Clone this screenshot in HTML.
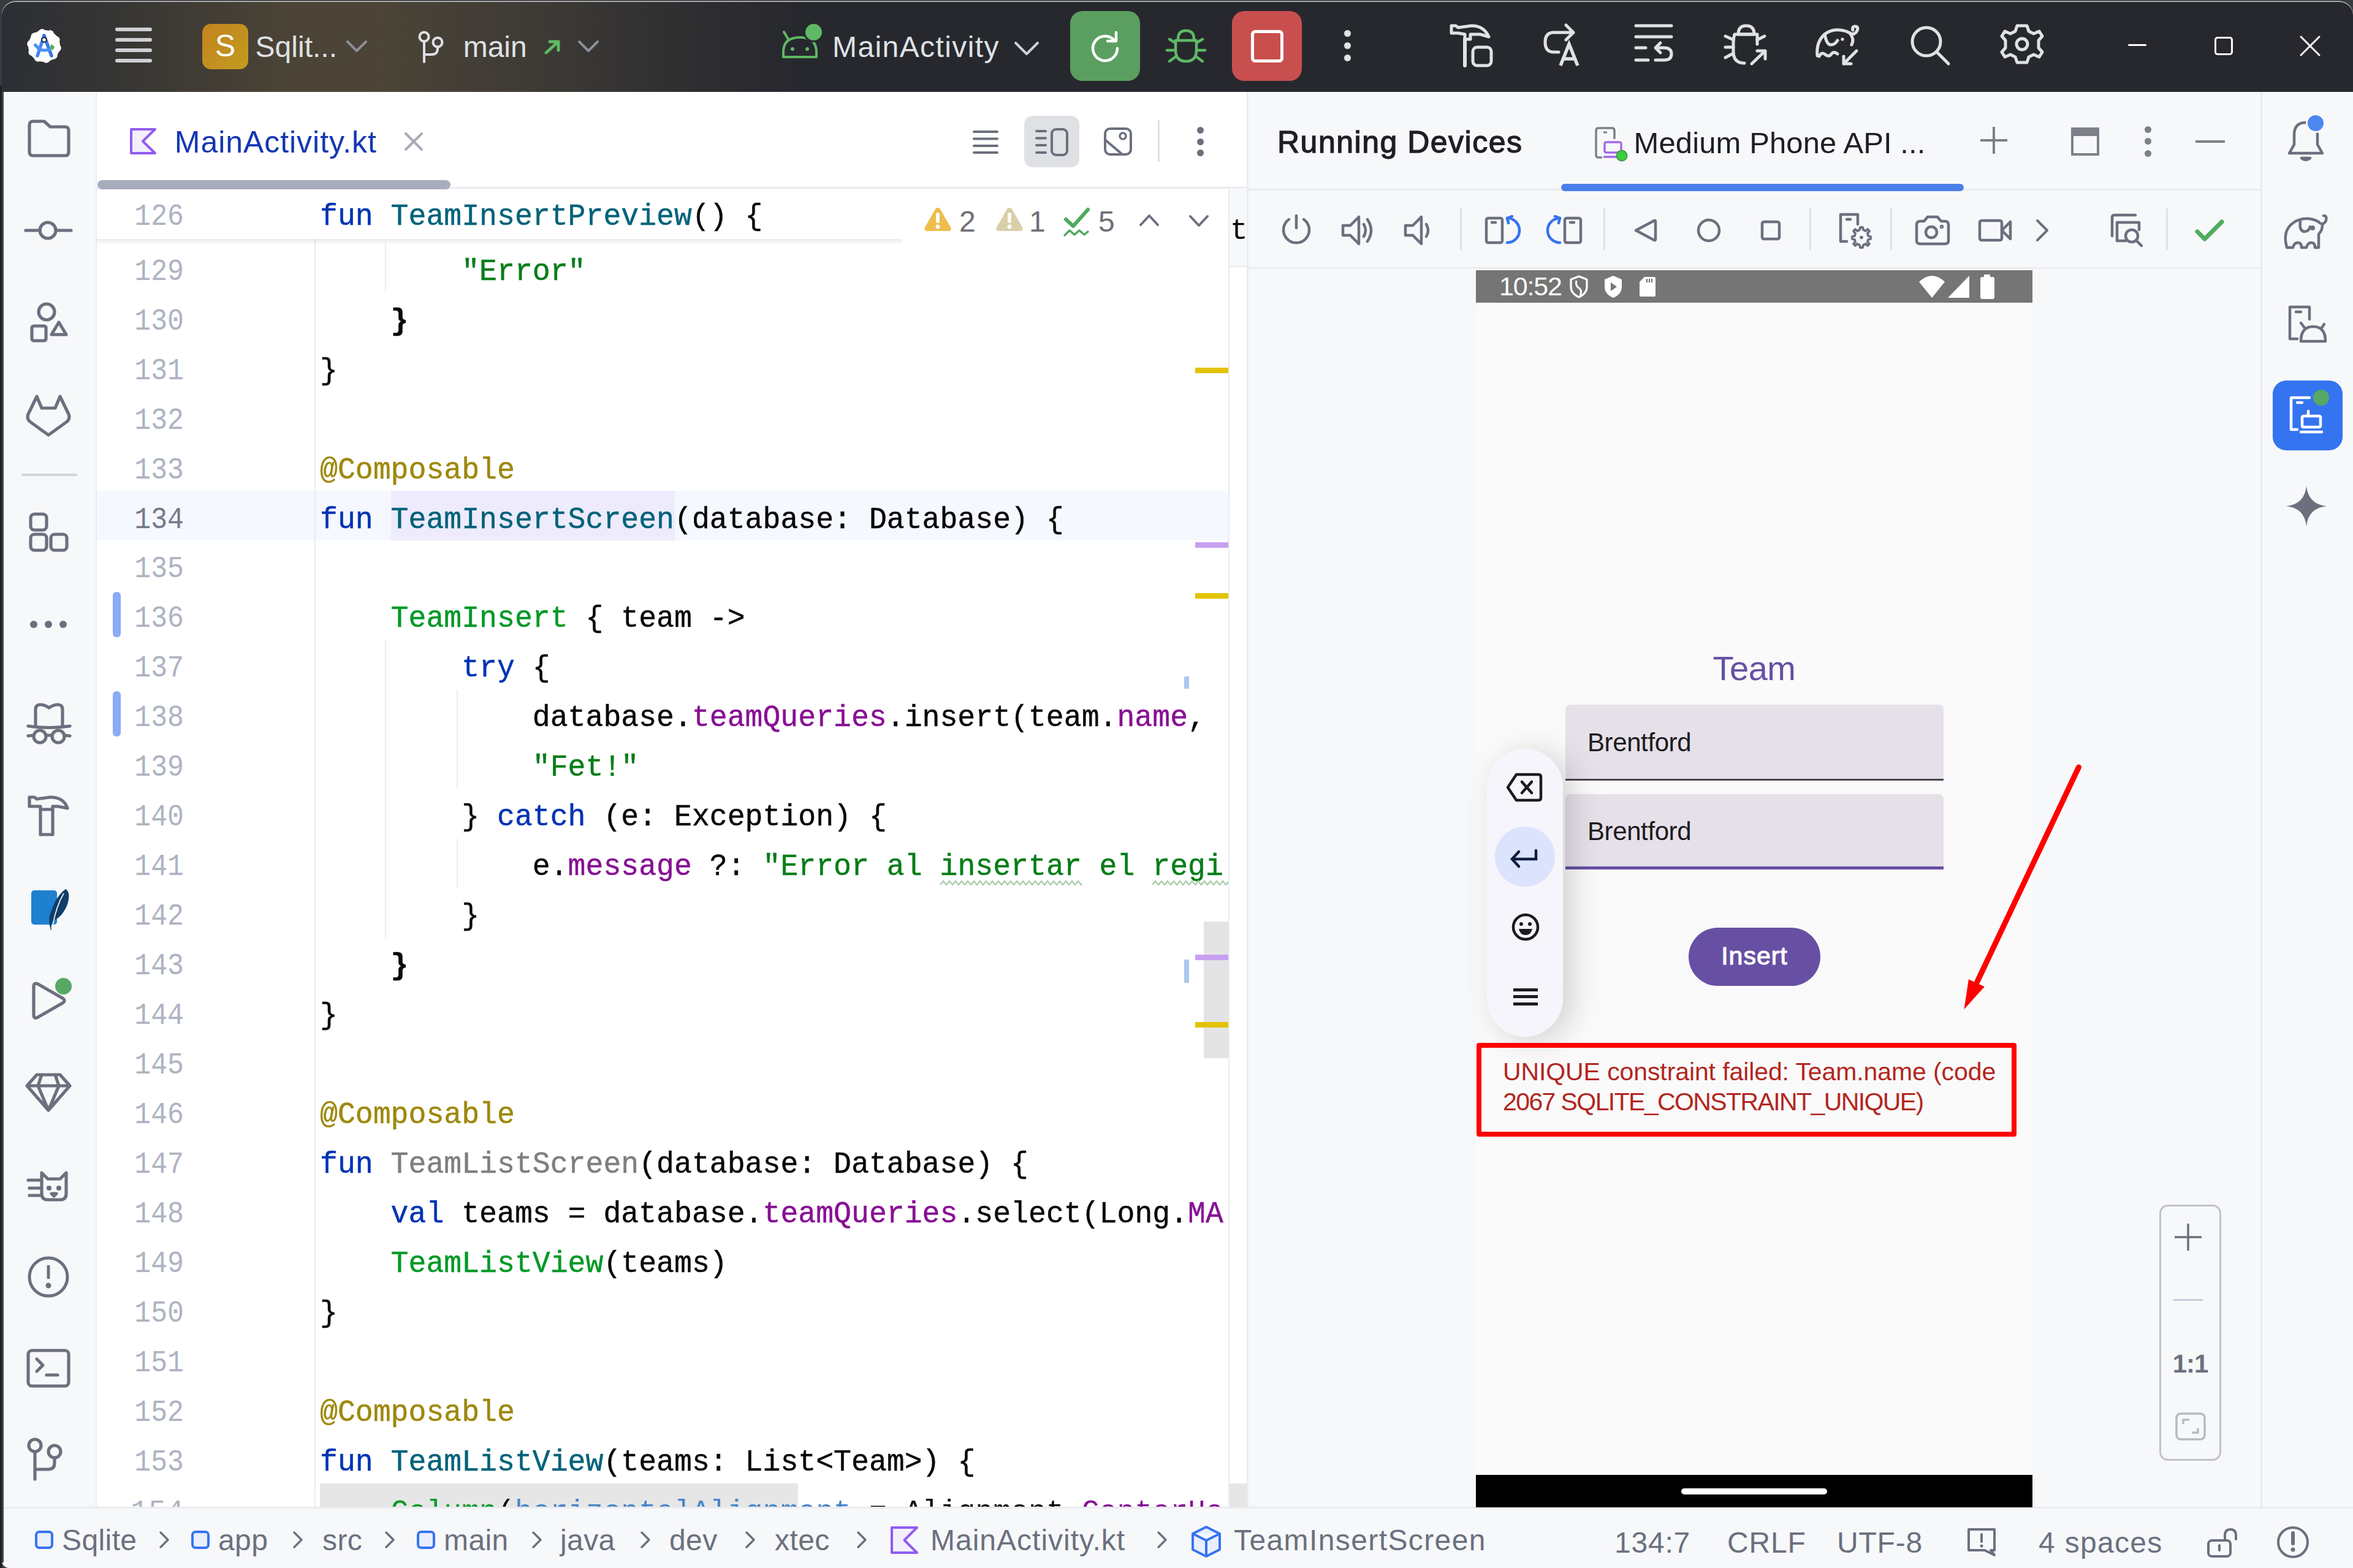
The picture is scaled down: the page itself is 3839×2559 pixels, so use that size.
<!DOCTYPE html>
<html><head><meta charset="utf-8"><style>
html,body{margin:0;padding:0;}
body{width:3839px;height:2559px;position:relative;overflow:hidden;background:#2b2d30;font-family:"Liberation Sans",sans-serif;}
div,svg{box-sizing:border-box;}
</style></head><body>
<div style="position:absolute;left:0px;top:0px;width:3839px;height:2559px;background:#3a3b3f;"></div>
<div style="position:absolute;left:20px;top:0px;width:3800px;height:3px;background:#4a4b4f;"></div>
<div style="position:absolute;left:3px;top:2px;width:3836px;height:2557px;background:#f7f8fa;border-radius:22px 22px 12px 12px;overflow:hidden;"></div>
<div style="position:absolute;left:3px;top:3px;width:3836px;height:147px;border-radius:22px 22px 0 0;background:linear-gradient(90deg,#2c2f35 0px,#363533 180px,#4a4336 450px,#4b4437 620px,#3c3935 900px,#2d2d30 1150px,#27282e 1300px,#27282e 3839px);"></div>
<div style="position:absolute;left:0px;top:140px;width:3px;height:2419px;background:#1f2023;"></div>
<div style="position:absolute;left:3px;top:150px;width:3px;height:2400px;background:#444548;"></div>
<div style="position:absolute;left:6px;top:150px;width:152px;height:2310px;background:#f7f8fa;border-right:2px solid #ebecf0;"></div>
<div style="position:absolute;left:158px;top:150px;width:1876px;height:2310px;background:#ffffff;"></div>
<div style="position:absolute;left:158px;top:305px;width:1876px;height:3px;background:#ebecf0;"></div>
<div style="position:absolute;left:2034px;top:150px;width:3px;height:2310px;background:#ebecf0;"></div>
<div style="position:absolute;left:2037px;top:150px;width:1651px;height:2310px;background:#f7f8fa;"></div>
<div style="position:absolute;left:2037px;top:308px;width:1651px;height:3px;background:#ebecf0;"></div>
<div style="position:absolute;left:2037px;top:436px;width:1651px;height:3px;background:#ebecf0;"></div>
<div style="position:absolute;left:3688px;top:150px;width:3px;height:2310px;background:#ebecf0;"></div>
<div style="position:absolute;left:3691px;top:150px;width:148px;height:2310px;background:#f7f8fa;"></div>
<div style="position:absolute;left:6px;top:2459px;width:3833px;height:3px;background:#ebecf0;"></div>
<div style="position:absolute;left:6px;top:2462px;width:3833px;height:97px;background:#f7f8fa;border-radius:0 0 0 12px;"></div>
<svg style="position:absolute;left:42px;top:45px;" width="60" height="60" viewBox="0 0 60 60"><circle cx="30" cy="30" r="26" fill="#ffffff"/><circle cx="51.24" cy="33.36" r="6.5" fill="#ffffff"/><circle cx="45.20" cy="45.20" r="6.5" fill="#ffffff"/><circle cx="33.36" cy="51.24" r="6.5" fill="#ffffff"/><circle cx="20.24" cy="49.16" r="6.5" fill="#ffffff"/><circle cx="10.84" cy="39.76" r="6.5" fill="#ffffff"/><circle cx="8.76" cy="26.64" r="6.5" fill="#ffffff"/><circle cx="14.80" cy="14.80" r="6.5" fill="#ffffff"/><circle cx="26.64" cy="8.76" r="6.5" fill="#ffffff"/><circle cx="39.76" cy="10.84" r="6.5" fill="#ffffff"/><circle cx="49.16" cy="20.24" r="6.5" fill="#ffffff"/>
<path d="M30 13 L19 46" stroke="#4285f4" stroke-width="5.5" stroke-linecap="round"/>
<path d="M30 13 L42 46" stroke="#3b78e7" stroke-width="5.5" stroke-linecap="round"/>
<path d="M15.5 28.5 L23 36 Q30 38 39 36" stroke="#4d8ef5" stroke-width="5" fill="none" stroke-linecap="round"/>
<circle cx="30" cy="20" r="3.8" fill="#fff" stroke="#1b2430" stroke-width="2"/>
<path d="M41 27 L47 31 L44 37 L40 34 Z" fill="#4caf50"/></svg>
<div style="position:absolute;left:188px;top:45px;width:60px;height:6px;background:#cfd0d4;border-radius:3px;"></div>
<div style="position:absolute;left:188px;top:62px;width:60px;height:6px;background:#cfd0d4;border-radius:3px;"></div>
<div style="position:absolute;left:188px;top:79px;width:60px;height:6px;background:#cfd0d4;border-radius:3px;"></div>
<div style="position:absolute;left:188px;top:96px;width:60px;height:6px;background:#cfd0d4;border-radius:3px;"></div>
<div style="position:absolute;left:330px;top:39px;width:75px;height:74px;background:linear-gradient(135deg,#c3831f,#c39b1f);border-radius:14px;"></div>
<div style="position:absolute;left:330px;top:48.25px;font-family:'Liberation Sans', sans-serif;font-size:50px;line-height:55.85px;color:#ffffff;font-weight:400;letter-spacing:0px;white-space:pre;width:75px;text-align:center;">S</div>
<div style="position:absolute;left:416.6px;top:50.06px;font-family:'Liberation Sans', sans-serif;font-size:48px;line-height:53.62px;color:#dfe1e5;font-weight:400;letter-spacing:0px;white-space:pre;">Sqlit...</div>
<svg style="position:absolute;left:563.0px;top:63.5px;" width="38" height="23.0" viewBox="0 0 38 23.0"><path d="M4 4 L19.0 19.0 L34 4" fill="none" stroke="#8c8f98" stroke-width="4" stroke-linecap="round" stroke-linejoin="round"/></svg>
<svg style="position:absolute;left:678px;top:46px;" width="50" height="60" viewBox="0 0 50 60"><circle cx="14" cy="14" r="7.5" fill="none" stroke="#dfe1e5" stroke-width="4"/>
<circle cx="36" cy="23" r="7.5" fill="none" stroke="#dfe1e5" stroke-width="4"/>
<path d="M14 21.5 L14 55 M14 43 L26 43 Q36 43 36 33 L36 30.5" fill="none" stroke="#dfe1e5" stroke-width="4" stroke-linecap="round"/></svg>
<div style="position:absolute;left:755.7px;top:50.06px;font-family:'Liberation Sans', sans-serif;font-size:48px;line-height:53.62px;color:#dfe1e5;font-weight:400;letter-spacing:0px;white-space:pre;">main</div>
<svg style="position:absolute;left:886px;top:62px;" width="32" height="30" viewBox="0 0 32 30"><path d="M5 24 L25 6 M11 6 L25 6 L25 20" fill="none" stroke="#5fb865" stroke-width="5" stroke-linecap="round" stroke-linejoin="round"/></svg>
<svg style="position:absolute;left:941.0px;top:63.5px;" width="38" height="23.0" viewBox="0 0 38 23.0"><path d="M4 4 L19.0 19.0 L34 4" fill="none" stroke="#8c8f98" stroke-width="4" stroke-linecap="round" stroke-linejoin="round"/></svg>
<svg style="position:absolute;left:1270px;top:35px;" width="70" height="66" viewBox="0 0 70 66"><path d="M8 58 L8 50 Q8 26 35 26 Q62 26 62 50 L62 58 Z" fill="none" stroke="#5fb865" stroke-width="4" stroke-linejoin="round"/>
<path d="M16 29 L9 17 M54 29 L58 22" stroke="#5fb865" stroke-width="4" stroke-linecap="round"/>
<circle cx="23" cy="45" r="3" fill="#5fb865"/><circle cx="47" cy="45" r="3" fill="#5fb865"/></svg>
<div style="position:absolute;left:1314px;top:39px;width:27px;height:27px;background:#5fb865;border-radius:50%;border:3px solid #27282e;box-sizing:content-box;left:1311px;top:36px;"></div>
<div style="position:absolute;left:1358px;top:50.06px;font-family:'Liberation Sans', sans-serif;font-size:48px;line-height:53.62px;color:#dfe1e5;font-weight:400;letter-spacing:1.4px;white-space:pre;">MainActivity</div>
<svg style="position:absolute;left:1653.0px;top:66.0px;" width="44" height="26.0" viewBox="0 0 44 26.0"><path d="M4 4 L22.0 22.0 L40 4" fill="none" stroke="#cfd1d6" stroke-width="4" stroke-linecap="round" stroke-linejoin="round"/></svg>
<div style="position:absolute;left:1746px;top:18px;width:114px;height:114px;background:#5b9f60;border-radius:20px;"></div>
<svg style="position:absolute;left:1773px;top:45px;" width="60" height="60" viewBox="0 0 60 60"><path d="M46 22 A20 20 0 1 0 50 34" fill="none" stroke="#ffffff" stroke-width="4.5" stroke-linecap="round"/><path d="M48 8 L48 22 L34 22" fill="none" stroke="#ffffff" stroke-width="4.5" stroke-linecap="round" stroke-linejoin="round"/></svg>
<svg style="position:absolute;left:1900px;top:42px;" width="70" height="66" viewBox="0 0 70 66"><path d="M22 22 Q22 8 35 8 Q48 8 48 22" fill="none" stroke="#5fb865" stroke-width="4.5"/>
<path d="M18 24 L52 24 L52 40 Q52 58 35 58 Q18 58 18 40 Z" fill="none" stroke="#5fb865" stroke-width="4.5" stroke-linejoin="round"/>
<path d="M4 40 L18 40 M52 40 L66 40 M8 22 L18 28 M62 22 L52 28 M8 58 L19 50 M62 58 L51 50" stroke="#5fb865" stroke-width="4.5" stroke-linecap="round"/></svg>
<div style="position:absolute;left:2010px;top:18px;width:114px;height:114px;background:#c94f4f;border-radius:20px;"></div>
<div style="position:absolute;left:2041px;top:49px;width:53px;height:53px;border:5px solid #ffffff;border-radius:7px;"></div>
<div style="position:absolute;left:2193px;top:48.9px;width:11px;height:11px;background:#dfe1e5;border-radius:50%;"></div>
<div style="position:absolute;left:2193px;top:69.3px;width:11px;height:11px;background:#dfe1e5;border-radius:50%;"></div>
<div style="position:absolute;left:2193px;top:89.3px;width:11px;height:11px;background:#dfe1e5;border-radius:50%;"></div>
<svg style="position:absolute;left:2365px;top:38px;" width="72" height="74" viewBox="0 0 72 74"><path d="M3 4 L10 4 L14 7 L36 4 Q56 4 64 22 L50 18 L34 18 L34 26 L25 26 L25 18 L14 16 L3 16 Z" fill="none" stroke="#dfe1e5" stroke-width="5" stroke-linejoin="round" stroke-linecap="round"/>
<path d="M25 26 L25 69" stroke="#dfe1e5" stroke-width="6" stroke-linecap="round"/>
<rect x="38" y="39" width="30" height="30" rx="7" fill="none" stroke="#dfe1e5" stroke-width="5"/></svg>
<svg style="position:absolute;left:2515px;top:37px;" width="70" height="72" viewBox="0 0 70 72"><path d="M28 48 L20 48 Q6 48 6 32 Q6 16 20 16 L52 16 M40 4 L52 16 L40 28" fill="none" stroke="#dfe1e5" stroke-width="5" stroke-linecap="round" stroke-linejoin="round"/>
<path d="M31 70 L45 35 L59 70 M36 59 L54 59" fill="none" stroke="#dfe1e5" stroke-width="5.5"/></svg>
<svg style="position:absolute;left:2665px;top:38px;" width="66" height="68" viewBox="0 0 66 68"><path d="M4 4 L62 4 M4 22 L62 22 M4 40 L20 40 M4 60 L24 60 M36 60 L50 60 Q62 60 62 50 Q62 40 50 40 L38 40 M44 32 L36 40 L44 48" fill="none" stroke="#dfe1e5" stroke-width="5" stroke-linecap="round" stroke-linejoin="round"/></svg>
<svg style="position:absolute;left:2812px;top:38px;" width="74" height="72" viewBox="0 0 74 72"><g fill="none" stroke="#dfe1e5" stroke-width="5" stroke-linecap="round" stroke-linejoin="round">
<path d="M24 18 Q24 4 37 4 Q50 4 50 18 Z"/>
<path d="M55 34 L55 18 L18 18 Q16 24 16 32 L16 46 Q16 65 34 65"/>
<path d="M3 21 L16 27 M3 39 L16 39 M3 56 L16 49 M67 21 L55 27"/>
<path d="M46 66 L68 45 M55 45 L68 45 L68 58"/></g></svg>
<svg style="position:absolute;left:2960px;top:38px;" width="80" height="72" viewBox="0 0 80 72"><g fill="none" stroke="#dfe1e5" stroke-width="5" stroke-linecap="round" stroke-linejoin="round">
<path d="M5 53 Q3 30 17 18 Q28 9 42 11 Q52 12 58 16 Q66 20 70 12 Q73 5 66 5 Q61 6 63 11"/>
<path d="M58 16 Q66 26 61 35"/>
<path d="M17 18 Q20 34 26 35 Q33 36 38 28"/>
<path d="M8 54 Q12 46 18 51 Q24 56 28 50 Q32 45 38 50"/>
<path d="M69 45 L48 66 M48 54 L48 66 L60 66"/></g>
<circle cx="46" cy="26" r="2.6" fill="#dfe1e5"/></svg>
<svg style="position:absolute;left:3115px;top:40px;" width="72" height="70" viewBox="0 0 72 70"><circle cx="28" cy="28" r="23" fill="none" stroke="#dfe1e5" stroke-width="5"/><path d="M45 45 L64 64" stroke="#dfe1e5" stroke-width="5" stroke-linecap="round"/></svg>
<svg style="position:absolute;left:3263px;top:38px;" width="72" height="72" viewBox="0 0 72 72"><path d="M36 4 L44 4 L47 13 L55 17 L64 13 L69 21 L63 28 L63 40 L69 47 L64 55 L55 51 L47 55 L44 64 L28 64 L25 55 L17 51 L8 55 L3 47 L9 40 L9 28 L3 21 L8 13 L17 17 L25 13 L28 4 Z" fill="none" stroke="#dfe1e5" stroke-width="5" stroke-linejoin="round"/>
<circle cx="36" cy="34" r="9" fill="none" stroke="#dfe1e5" stroke-width="5"/></svg>
<div style="position:absolute;left:3472px;top:72px;width:30px;height:3px;background:#ffffff;border-radius:1.5px;"></div>
<div style="position:absolute;left:3613px;top:60px;width:30px;height:30px;border:3px solid #ffffff;border-radius:5px;"></div>
<svg style="position:absolute;left:3750px;top:56px;" width="38" height="38" viewBox="0 0 38 38"><path d="M4 4 L34 34 M34 4 L4 34" stroke="#ffffff" stroke-width="3" stroke-linecap="round"/></svg>
<div style="position:absolute;left:158px;top:801px;width:1846px;height:81px;background:#f5f8fe;"></div>
<div style="position:absolute;left:638px;top:801px;width:463px;height:81px;background:#edebfc;"></div>
<div style="position:absolute;left:513px;top:390px;width:2px;height:2070px;background:#ebecf0;"></div>
<div style="position:absolute;left:628px;top:396px;width:2px;height:80px;background:#ebecf0;"></div>
<div style="position:absolute;left:628px;top:1045px;width:2px;height:485px;background:#ebecf0;"></div>
<div style="position:absolute;left:745px;top:1126px;width:2px;height:160px;background:#ebecf0;"></div>
<div style="position:absolute;left:745px;top:1369px;width:2px;height:80px;background:#ebecf0;"></div>
<div style="position:absolute;left:200px;top:416.71px;width:100px;text-align:right;font-family:'Liberation Mono', monospace;font-size:48.16px;line-height:54.56px;white-space:pre;color:#aeb3c2;transform:scale(0.93,1.04);transform-origin:100% 40.09px;">129</div>
<div style="position:absolute;left:522px;top:410.71px;width:1482px;height:66.56px;overflow:hidden;"><div style="position:absolute;left:0;top:6px;font-family:'Liberation Mono', monospace;font-size:48.16px;line-height:54.56px;white-space:pre;color:#080808;transform:scaleY(1.03);-webkit-text-stroke:0.45px currentColor;transform-origin:0 40.09px;"><span style="color:#080808;">        </span><span style="color:#067d17;">&quot;Error&quot;</span></div></div>
<div style="position:absolute;left:200px;top:497.67px;width:100px;text-align:right;font-family:'Liberation Mono', monospace;font-size:48.16px;line-height:54.56px;white-space:pre;color:#aeb3c2;transform:scale(0.93,1.04);transform-origin:100% 40.09px;">130</div>
<div style="position:absolute;left:522px;top:491.67px;width:1482px;height:66.56px;overflow:hidden;"><div style="position:absolute;left:0;top:6px;font-family:'Liberation Mono', monospace;font-size:48.16px;line-height:54.56px;white-space:pre;color:#080808;transform:scaleY(1.03);-webkit-text-stroke:0.45px currentColor;transform-origin:0 40.09px;"><span style="color:#080808;">    </span><span style="color:#080808;font-weight:700;">}</span></div></div>
<div style="position:absolute;left:200px;top:578.63px;width:100px;text-align:right;font-family:'Liberation Mono', monospace;font-size:48.16px;line-height:54.56px;white-space:pre;color:#aeb3c2;transform:scale(0.93,1.04);transform-origin:100% 40.09px;">131</div>
<div style="position:absolute;left:522px;top:572.63px;width:1482px;height:66.56px;overflow:hidden;"><div style="position:absolute;left:0;top:6px;font-family:'Liberation Mono', monospace;font-size:48.16px;line-height:54.56px;white-space:pre;color:#080808;transform:scaleY(1.03);-webkit-text-stroke:0.45px currentColor;transform-origin:0 40.09px;"><span style="color:#080808;">}</span></div></div>
<div style="position:absolute;left:200px;top:659.59px;width:100px;text-align:right;font-family:'Liberation Mono', monospace;font-size:48.16px;line-height:54.56px;white-space:pre;color:#aeb3c2;transform:scale(0.93,1.04);transform-origin:100% 40.09px;">132</div>
<div style="position:absolute;left:200px;top:740.55px;width:100px;text-align:right;font-family:'Liberation Mono', monospace;font-size:48.16px;line-height:54.56px;white-space:pre;color:#aeb3c2;transform:scale(0.93,1.04);transform-origin:100% 40.09px;">133</div>
<div style="position:absolute;left:522px;top:734.55px;width:1482px;height:66.56px;overflow:hidden;"><div style="position:absolute;left:0;top:6px;font-family:'Liberation Mono', monospace;font-size:48.16px;line-height:54.56px;white-space:pre;color:#080808;transform:scaleY(1.03);-webkit-text-stroke:0.45px currentColor;transform-origin:0 40.09px;"><span style="color:#9e880d;">@Composable</span></div></div>
<div style="position:absolute;left:200px;top:821.51px;width:100px;text-align:right;font-family:'Liberation Mono', monospace;font-size:48.16px;line-height:54.56px;white-space:pre;color:#767a8a;transform:scale(0.93,1.04);transform-origin:100% 40.09px;">134</div>
<div style="position:absolute;left:522px;top:815.51px;width:1482px;height:66.56px;overflow:hidden;"><div style="position:absolute;left:0;top:6px;font-family:'Liberation Mono', monospace;font-size:48.16px;line-height:54.56px;white-space:pre;color:#080808;transform:scaleY(1.03);-webkit-text-stroke:0.45px currentColor;transform-origin:0 40.09px;"><span style="color:#0033b3;">fun </span><span style="color:#00627a;">TeamInsertScreen</span><span style="color:#080808;">(database: Database) {</span></div></div>
<div style="position:absolute;left:200px;top:902.47px;width:100px;text-align:right;font-family:'Liberation Mono', monospace;font-size:48.16px;line-height:54.56px;white-space:pre;color:#aeb3c2;transform:scale(0.93,1.04);transform-origin:100% 40.09px;">135</div>
<div style="position:absolute;left:200px;top:983.43px;width:100px;text-align:right;font-family:'Liberation Mono', monospace;font-size:48.16px;line-height:54.56px;white-space:pre;color:#aeb3c2;transform:scale(0.93,1.04);transform-origin:100% 40.09px;">136</div>
<div style="position:absolute;left:522px;top:977.43px;width:1482px;height:66.56px;overflow:hidden;"><div style="position:absolute;left:0;top:6px;font-family:'Liberation Mono', monospace;font-size:48.16px;line-height:54.56px;white-space:pre;color:#080808;transform:scaleY(1.03);-webkit-text-stroke:0.45px currentColor;transform-origin:0 40.09px;"><span style="color:#080808;">    </span><span style="color:#009926;">TeamInsert</span><span style="color:#080808;"> { team -&gt;</span></div></div>
<div style="position:absolute;left:200px;top:1064.39px;width:100px;text-align:right;font-family:'Liberation Mono', monospace;font-size:48.16px;line-height:54.56px;white-space:pre;color:#aeb3c2;transform:scale(0.93,1.04);transform-origin:100% 40.09px;">137</div>
<div style="position:absolute;left:522px;top:1058.39px;width:1482px;height:66.56px;overflow:hidden;"><div style="position:absolute;left:0;top:6px;font-family:'Liberation Mono', monospace;font-size:48.16px;line-height:54.56px;white-space:pre;color:#080808;transform:scaleY(1.03);-webkit-text-stroke:0.45px currentColor;transform-origin:0 40.09px;"><span style="color:#080808;">        </span><span style="color:#0033b3;">try</span><span style="color:#080808;"> {</span></div></div>
<div style="position:absolute;left:200px;top:1145.35px;width:100px;text-align:right;font-family:'Liberation Mono', monospace;font-size:48.16px;line-height:54.56px;white-space:pre;color:#aeb3c2;transform:scale(0.93,1.04);transform-origin:100% 40.09px;">138</div>
<div style="position:absolute;left:522px;top:1139.35px;width:1482px;height:66.56px;overflow:hidden;"><div style="position:absolute;left:0;top:6px;font-family:'Liberation Mono', monospace;font-size:48.16px;line-height:54.56px;white-space:pre;color:#080808;transform:scaleY(1.03);-webkit-text-stroke:0.45px currentColor;transform-origin:0 40.09px;"><span style="color:#080808;">            database.</span><span style="color:#871094;">teamQueries</span><span style="color:#080808;">.insert(team.</span><span style="color:#871094;">name</span><span style="color:#080808;">, </span></div></div>
<div style="position:absolute;left:200px;top:1226.31px;width:100px;text-align:right;font-family:'Liberation Mono', monospace;font-size:48.16px;line-height:54.56px;white-space:pre;color:#aeb3c2;transform:scale(0.93,1.04);transform-origin:100% 40.09px;">139</div>
<div style="position:absolute;left:522px;top:1220.31px;width:1482px;height:66.56px;overflow:hidden;"><div style="position:absolute;left:0;top:6px;font-family:'Liberation Mono', monospace;font-size:48.16px;line-height:54.56px;white-space:pre;color:#080808;transform:scaleY(1.03);-webkit-text-stroke:0.45px currentColor;transform-origin:0 40.09px;"><span style="color:#080808;">            </span><span style="color:#067d17;">&quot;Fet!&quot;</span></div></div>
<div style="position:absolute;left:200px;top:1307.27px;width:100px;text-align:right;font-family:'Liberation Mono', monospace;font-size:48.16px;line-height:54.56px;white-space:pre;color:#aeb3c2;transform:scale(0.93,1.04);transform-origin:100% 40.09px;">140</div>
<div style="position:absolute;left:522px;top:1301.27px;width:1482px;height:66.56px;overflow:hidden;"><div style="position:absolute;left:0;top:6px;font-family:'Liberation Mono', monospace;font-size:48.16px;line-height:54.56px;white-space:pre;color:#080808;transform:scaleY(1.03);-webkit-text-stroke:0.45px currentColor;transform-origin:0 40.09px;"><span style="color:#080808;">        } </span><span style="color:#0033b3;">catch</span><span style="color:#080808;"> (e: Exception) {</span></div></div>
<div style="position:absolute;left:200px;top:1388.23px;width:100px;text-align:right;font-family:'Liberation Mono', monospace;font-size:48.16px;line-height:54.56px;white-space:pre;color:#aeb3c2;transform:scale(0.93,1.04);transform-origin:100% 40.09px;">141</div>
<div style="position:absolute;left:522px;top:1382.23px;width:1482px;height:66.56px;overflow:hidden;"><div style="position:absolute;left:0;top:6px;font-family:'Liberation Mono', monospace;font-size:48.16px;line-height:54.56px;white-space:pre;color:#080808;transform:scaleY(1.03);-webkit-text-stroke:0.45px currentColor;transform-origin:0 40.09px;"><span style="color:#080808;">            e.</span><span style="color:#871094;">message</span><span style="color:#080808;"> ?: </span><span style="color:#067d17;">&quot;Error al insertar el regi</span></div></div>
<div style="position:absolute;left:200px;top:1469.19px;width:100px;text-align:right;font-family:'Liberation Mono', monospace;font-size:48.16px;line-height:54.56px;white-space:pre;color:#aeb3c2;transform:scale(0.93,1.04);transform-origin:100% 40.09px;">142</div>
<div style="position:absolute;left:522px;top:1463.19px;width:1482px;height:66.56px;overflow:hidden;"><div style="position:absolute;left:0;top:6px;font-family:'Liberation Mono', monospace;font-size:48.16px;line-height:54.56px;white-space:pre;color:#080808;transform:scaleY(1.03);-webkit-text-stroke:0.45px currentColor;transform-origin:0 40.09px;"><span style="color:#080808;">        }</span></div></div>
<div style="position:absolute;left:200px;top:1550.15px;width:100px;text-align:right;font-family:'Liberation Mono', monospace;font-size:48.16px;line-height:54.56px;white-space:pre;color:#aeb3c2;transform:scale(0.93,1.04);transform-origin:100% 40.09px;">143</div>
<div style="position:absolute;left:522px;top:1544.15px;width:1482px;height:66.56px;overflow:hidden;"><div style="position:absolute;left:0;top:6px;font-family:'Liberation Mono', monospace;font-size:48.16px;line-height:54.56px;white-space:pre;color:#080808;transform:scaleY(1.03);-webkit-text-stroke:0.45px currentColor;transform-origin:0 40.09px;"><span style="color:#080808;">    </span><span style="color:#080808;font-weight:700;">}</span></div></div>
<div style="position:absolute;left:200px;top:1631.11px;width:100px;text-align:right;font-family:'Liberation Mono', monospace;font-size:48.16px;line-height:54.56px;white-space:pre;color:#aeb3c2;transform:scale(0.93,1.04);transform-origin:100% 40.09px;">144</div>
<div style="position:absolute;left:522px;top:1625.11px;width:1482px;height:66.56px;overflow:hidden;"><div style="position:absolute;left:0;top:6px;font-family:'Liberation Mono', monospace;font-size:48.16px;line-height:54.56px;white-space:pre;color:#080808;transform:scaleY(1.03);-webkit-text-stroke:0.45px currentColor;transform-origin:0 40.09px;"><span style="color:#080808;">}</span></div></div>
<div style="position:absolute;left:200px;top:1712.07px;width:100px;text-align:right;font-family:'Liberation Mono', monospace;font-size:48.16px;line-height:54.56px;white-space:pre;color:#aeb3c2;transform:scale(0.93,1.04);transform-origin:100% 40.09px;">145</div>
<div style="position:absolute;left:200px;top:1793.03px;width:100px;text-align:right;font-family:'Liberation Mono', monospace;font-size:48.16px;line-height:54.56px;white-space:pre;color:#aeb3c2;transform:scale(0.93,1.04);transform-origin:100% 40.09px;">146</div>
<div style="position:absolute;left:522px;top:1787.03px;width:1482px;height:66.56px;overflow:hidden;"><div style="position:absolute;left:0;top:6px;font-family:'Liberation Mono', monospace;font-size:48.16px;line-height:54.56px;white-space:pre;color:#080808;transform:scaleY(1.03);-webkit-text-stroke:0.45px currentColor;transform-origin:0 40.09px;"><span style="color:#9e880d;">@Composable</span></div></div>
<div style="position:absolute;left:200px;top:1873.99px;width:100px;text-align:right;font-family:'Liberation Mono', monospace;font-size:48.16px;line-height:54.56px;white-space:pre;color:#aeb3c2;transform:scale(0.93,1.04);transform-origin:100% 40.09px;">147</div>
<div style="position:absolute;left:522px;top:1867.99px;width:1482px;height:66.56px;overflow:hidden;"><div style="position:absolute;left:0;top:6px;font-family:'Liberation Mono', monospace;font-size:48.16px;line-height:54.56px;white-space:pre;color:#080808;transform:scaleY(1.03);-webkit-text-stroke:0.45px currentColor;transform-origin:0 40.09px;"><span style="color:#0033b3;">fun </span><span style="color:#7f7f7f;">TeamListScreen</span><span style="color:#080808;">(database: Database) {</span></div></div>
<div style="position:absolute;left:200px;top:1954.95px;width:100px;text-align:right;font-family:'Liberation Mono', monospace;font-size:48.16px;line-height:54.56px;white-space:pre;color:#aeb3c2;transform:scale(0.93,1.04);transform-origin:100% 40.09px;">148</div>
<div style="position:absolute;left:522px;top:1948.95px;width:1482px;height:66.56px;overflow:hidden;"><div style="position:absolute;left:0;top:6px;font-family:'Liberation Mono', monospace;font-size:48.16px;line-height:54.56px;white-space:pre;color:#080808;transform:scaleY(1.03);-webkit-text-stroke:0.45px currentColor;transform-origin:0 40.09px;"><span style="color:#080808;">    </span><span style="color:#0033b3;">val</span><span style="color:#080808;"> teams = database.</span><span style="color:#871094;">teamQueries</span><span style="color:#080808;">.select(Long.</span><span style="color:#871094;">MA</span></div></div>
<div style="position:absolute;left:200px;top:2035.91px;width:100px;text-align:right;font-family:'Liberation Mono', monospace;font-size:48.16px;line-height:54.56px;white-space:pre;color:#aeb3c2;transform:scale(0.93,1.04);transform-origin:100% 40.09px;">149</div>
<div style="position:absolute;left:522px;top:2029.91px;width:1482px;height:66.56px;overflow:hidden;"><div style="position:absolute;left:0;top:6px;font-family:'Liberation Mono', monospace;font-size:48.16px;line-height:54.56px;white-space:pre;color:#080808;transform:scaleY(1.03);-webkit-text-stroke:0.45px currentColor;transform-origin:0 40.09px;"><span style="color:#080808;">    </span><span style="color:#009926;">TeamListView</span><span style="color:#080808;">(teams)</span></div></div>
<div style="position:absolute;left:200px;top:2116.87px;width:100px;text-align:right;font-family:'Liberation Mono', monospace;font-size:48.16px;line-height:54.56px;white-space:pre;color:#aeb3c2;transform:scale(0.93,1.04);transform-origin:100% 40.09px;">150</div>
<div style="position:absolute;left:522px;top:2110.87px;width:1482px;height:66.56px;overflow:hidden;"><div style="position:absolute;left:0;top:6px;font-family:'Liberation Mono', monospace;font-size:48.16px;line-height:54.56px;white-space:pre;color:#080808;transform:scaleY(1.03);-webkit-text-stroke:0.45px currentColor;transform-origin:0 40.09px;"><span style="color:#080808;">}</span></div></div>
<div style="position:absolute;left:200px;top:2197.83px;width:100px;text-align:right;font-family:'Liberation Mono', monospace;font-size:48.16px;line-height:54.56px;white-space:pre;color:#aeb3c2;transform:scale(0.93,1.04);transform-origin:100% 40.09px;">151</div>
<div style="position:absolute;left:200px;top:2278.79px;width:100px;text-align:right;font-family:'Liberation Mono', monospace;font-size:48.16px;line-height:54.56px;white-space:pre;color:#aeb3c2;transform:scale(0.93,1.04);transform-origin:100% 40.09px;">152</div>
<div style="position:absolute;left:522px;top:2272.79px;width:1482px;height:66.56px;overflow:hidden;"><div style="position:absolute;left:0;top:6px;font-family:'Liberation Mono', monospace;font-size:48.16px;line-height:54.56px;white-space:pre;color:#080808;transform:scaleY(1.03);-webkit-text-stroke:0.45px currentColor;transform-origin:0 40.09px;"><span style="color:#9e880d;">@Composable</span></div></div>
<div style="position:absolute;left:200px;top:2359.75px;width:100px;text-align:right;font-family:'Liberation Mono', monospace;font-size:48.16px;line-height:54.56px;white-space:pre;color:#aeb3c2;transform:scale(0.93,1.04);transform-origin:100% 40.09px;">153</div>
<div style="position:absolute;left:522px;top:2353.75px;width:1482px;height:66.56px;overflow:hidden;"><div style="position:absolute;left:0;top:6px;font-family:'Liberation Mono', monospace;font-size:48.16px;line-height:54.56px;white-space:pre;color:#080808;transform:scaleY(1.03);-webkit-text-stroke:0.45px currentColor;transform-origin:0 40.09px;"><span style="color:#0033b3;">fun </span><span style="color:#00627a;">TeamListView</span><span style="color:#080808;">(teams: List&lt;Team&gt;) {</span></div></div>
<div style="position:absolute;left:158px;top:2421px;width:1846px;height:38px;overflow:hidden;">
<div style="position:absolute;left:364px;top:0;width:780px;height:40px;background:#e6e6e6;"></div>
<div style="position:absolute;left:364px;top:20.31px;font-family:'Liberation Mono', monospace;font-size:48.16px;line-height:54.56px;white-space:pre;"><span style="color:#080808">    </span><span style="color:#009926">Column</span><span style="color:#080808">(</span><span style="color:#4a86c7">horizontalAlignment</span><span style="color:#080808"> = Alignment.</span><span style="color:#871094">CenterHo</span></div>
<div style="position:absolute;left:42px;top:20.31px;width:100px;text-align:right;font-family:'Liberation Mono', monospace;font-size:48.16px;line-height:54.56px;color:#aeb3c2;">154</div>
</div>
<svg style="position:absolute;left:1533.5px;top:1436px;" width="231.20000000000005" height="12" viewBox="0 0 231.20000000000005 12"><path d="M0 8 l5 -6 l5 6 l5 -6 l5 6 l5 -6 l5 6 l5 -6 l5 6 l5 -6 l5 6 l5 -6 l5 6 l5 -6 l5 6 l5 -6 l5 6 l5 -6 l5 6 l5 -6 l5 6 l5 -6 l5 6 l5 -6 l5 6 l5 -6 l5 6 l5 -6 l5 6 l5 -6 l5 6 l5 -6 l5 6 l5 -6 l5 6 l5 -6 l5 6 l5 -6 l5 6 l5 -6 l5 6 l5 -6 l5 6 l5 -6 l5 6 l5 -6 l5 6 l5 -6 l5 6" fill="none" stroke="#a9c9a9" stroke-width="2.2"/></svg>
<svg style="position:absolute;left:1880.3px;top:1436px;" width="123.70000000000005" height="12" viewBox="0 0 123.70000000000005 12"><path d="M0 8 l5 -6 l5 6 l5 -6 l5 6 l5 -6 l5 6 l5 -6 l5 6 l5 -6 l5 6 l5 -6 l5 6 l5 -6 l5 6 l5 -6 l5 6 l5 -6 l5 6 l5 -6 l5 6 l5 -6 l5 6 l5 -6 l5 6 l5 -6 l5 6" fill="none" stroke="#a9c9a9" stroke-width="2.2"/></svg>
<div style="position:absolute;left:184px;top:966px;width:13px;height:74px;background:#8aabf5;border-radius:6px;"></div>
<div style="position:absolute;left:184px;top:1128px;width:13px;height:74px;background:#8aabf5;border-radius:6px;"></div>
<div style="position:absolute;left:158px;top:309px;width:1846px;height:81px;background:#ffffff;"></div>
<div style="position:absolute;left:158px;top:390px;width:1314px;height:10px;background:linear-gradient(180deg,rgba(0,0,0,0.08),rgba(0,0,0,0));"></div>
<div style="position:absolute;left:200px;top:327.01px;width:100px;text-align:right;font-family:'Liberation Mono', monospace;font-size:48.16px;line-height:54.56px;white-space:pre;color:#aeb3c2;transform:scale(0.93,1.04);transform-origin:100% 40.09px;">126</div>
<div style="position:absolute;left:522px;top:321.01px;width:950px;height:66.56px;overflow:hidden;"><div style="position:absolute;left:0;top:6px;font-family:'Liberation Mono', monospace;font-size:48.16px;line-height:54.56px;white-space:pre;color:#080808;transform:scaleY(1.03);-webkit-text-stroke:0.45px currentColor;transform-origin:0 40.09px;"><span style="color:#0033b3;">fun </span><span style="color:#00627a;">TeamInsertPreview</span><span style="color:#080808;">() {</span></div></div>
<div style="position:absolute;left:2004px;top:309px;width:30px;height:2151px;background:#ffffff;"></div>
<div style="position:absolute;left:2004px;top:309px;width:30px;height:126px;background:#f7f8fa;"></div>
<div style="position:absolute;left:1964px;top:1504px;width:40px;height:223px;background:#e4e4e6;"></div>
<div style="position:absolute;left:1950px;top:600px;width:54px;height:9px;background:#e2c300;"></div>
<div style="position:absolute;left:1950px;top:885px;width:54px;height:9px;background:#c8a0f0;"></div>
<div style="position:absolute;left:1950px;top:968px;width:54px;height:9px;background:#e2c300;"></div>
<div style="position:absolute;left:1950px;top:1558px;width:54px;height:9px;background:#c8a0f0;"></div>
<div style="position:absolute;left:1950px;top:1668px;width:54px;height:9px;background:#e2c300;"></div>
<div style="position:absolute;left:1932px;top:1104px;width:8px;height:20px;background:#a9c8ec;"></div>
<div style="position:absolute;left:1932px;top:1566px;width:8px;height:38px;background:#a9c8ec;"></div>
<div style="position:absolute;left:2004px;top:2421px;width:30px;height:39px;background:#e6e6e6;"></div>
<svg style="position:absolute;left:211px;top:208px;" width="45" height="45" viewBox="0 0 45 45"><path d="M3 3 L42 3 L22 22.5 L42 42 L3 42 Z" fill="#f3effc" stroke="#8f5cf2" stroke-width="4" stroke-linejoin="round"/></svg>
<div style="position:absolute;left:284.8px;top:204.75px;font-family:'Liberation Sans', sans-serif;font-size:50px;line-height:55.85px;color:#1437b2;font-weight:400;letter-spacing:0.95px;white-space:pre;">MainActivity.kt</div>
<svg style="position:absolute;left:658px;top:214px;" width="34" height="34" viewBox="0 0 34 34"><path d="M4 4 L30 30 M30 4 L4 30" stroke="#a8abb6" stroke-width="4" stroke-linecap="round"/></svg>
<div style="position:absolute;left:159px;top:294px;width:576px;height:15px;background:#a8adbd;border-radius:8px;"></div>
<svg style="position:absolute;left:1586px;top:209px;" width="44" height="44" viewBox="0 0 44 44"><path d="M3 6 L41 6" stroke="#6c707e" stroke-width="4" stroke-linecap="round"/><path d="M3 17.5 L41 17.5" stroke="#6c707e" stroke-width="4" stroke-linecap="round"/><path d="M3 29 L41 29" stroke="#6c707e" stroke-width="4" stroke-linecap="round"/><path d="M3 40 L41 40" stroke="#6c707e" stroke-width="4" stroke-linecap="round"/></svg>
<div style="position:absolute;left:1671px;top:189px;width:90px;height:84px;background:#dfe1e5;border-radius:14px;"></div>
<svg style="position:absolute;left:1688px;top:209px;" width="56" height="46" viewBox="0 0 56 46"><path d="M3 5 L18 5" stroke="#6c707e" stroke-width="4" stroke-linecap="round"/><path d="M3 16.5 L18 16.5" stroke="#6c707e" stroke-width="4" stroke-linecap="round"/><path d="M3 28 L18 28" stroke="#6c707e" stroke-width="4" stroke-linecap="round"/><path d="M3 40 L18 40" stroke="#6c707e" stroke-width="4" stroke-linecap="round"/><rect x="28" y="2" width="25" height="42" rx="7" fill="none" stroke="#6c707e" stroke-width="4"/></svg>
<svg style="position:absolute;left:1800px;top:207px;" width="48" height="48" viewBox="0 0 48 48"><rect x="3" y="3" width="42" height="42" rx="8" fill="none" stroke="#6c707e" stroke-width="4"/><circle cx="32" cy="15" r="5" fill="none" stroke="#6c707e" stroke-width="3.5"/><path d="M4 22 L30 44" stroke="#6c707e" stroke-width="4"/></svg>
<div style="position:absolute;left:1889px;top:196px;width:3px;height:68px;background:#dfe1e5;"></div>
<div style="position:absolute;left:1953px;top:207px;width:11px;height:11px;background:#6c707e;border-radius:50%;"></div>
<div style="position:absolute;left:1953px;top:225.8px;width:11px;height:11px;background:#6c707e;border-radius:50%;"></div>
<div style="position:absolute;left:1953px;top:244px;width:11px;height:11px;background:#6c707e;border-radius:50%;"></div>
<div style="position:absolute;left:1472px;top:309px;width:532px;height:91px;background:#ffffff;"></div>
<svg style="position:absolute;left:1506px;top:336px;" width="48" height="44" viewBox="0 0 48 44"><path d="M24 3 Q27 3 29 7 L45 35 Q47 41 41 41 L7 41 Q1 41 3 35 L19 7 Q21 3 24 3 Z" fill="#eebd4c"/><rect x="21" y="11" width="6" height="17" rx="3" fill="#fff"/><circle cx="24" cy="34" r="3.5" fill="#fff"/></svg>
<div style="position:absolute;left:1565px;top:334.56px;font-family:'Liberation Sans', sans-serif;font-size:48px;line-height:53.62px;color:#6e6f75;font-weight:400;letter-spacing:0px;white-space:pre;">2</div>
<svg style="position:absolute;left:1623px;top:336px;" width="48" height="44" viewBox="0 0 48 44"><path d="M24 3 Q27 3 29 7 L45 35 Q47 41 41 41 L7 41 Q1 41 3 35 L19 7 Q21 3 24 3 Z" fill="#d9cfa8"/><rect x="21" y="11" width="6" height="17" rx="3" fill="#fff"/><circle cx="24" cy="34" r="3.5" fill="#fff"/></svg>
<div style="position:absolute;left:1679px;top:334.56px;font-family:'Liberation Sans', sans-serif;font-size:48px;line-height:53.62px;color:#6e6f75;font-weight:400;letter-spacing:0px;white-space:pre;">1</div>
<svg style="position:absolute;left:1733px;top:336px;" width="48" height="52" viewBox="0 0 48 52"><path d="M6 22 L18 33 L42 6" fill="none" stroke="#4faa5f" stroke-width="6" stroke-linecap="round" stroke-linejoin="round"/><path d="M4 48 L12 40 L20 47 L28 40 L36 47 L42 42" fill="none" stroke="#4faa5f" stroke-width="3.5" stroke-linecap="round" stroke-linejoin="round"/></svg>
<div style="position:absolute;left:1792px;top:334.56px;font-family:'Liberation Sans', sans-serif;font-size:48px;line-height:53.62px;color:#6e6f75;font-weight:400;letter-spacing:0px;white-space:pre;">5</div>
<svg style="position:absolute;left:1857px;top:347px;" width="36" height="26" viewBox="0 0 36 26"><path d="M4 20 L18 5 L32 20" fill="none" stroke="#6c707e" stroke-width="4" stroke-linecap="round" stroke-linejoin="round"/></svg>
<svg style="position:absolute;left:1938px;top:348px;" width="36" height="26" viewBox="0 0 36 26"><path d="M4 5 L18 20 L32 5" fill="none" stroke="#6c707e" stroke-width="4" stroke-linecap="round" stroke-linejoin="round"/></svg>
<div style="position:absolute;left:2005px;top:330px;width:29px;height:90px;overflow:hidden;"><div style="position:absolute;left:2px;top:20.3px;font-family:'Liberation Mono', monospace;font-size:48.16px;line-height:54.56px;color:#080808;white-space:pre;">te</div></div>
<svg style="position:absolute;left:42px;top:194px;" width="75" height="64" viewBox="0 0 75 64"><g fill="none" stroke="#6c707e" stroke-width="5.2" stroke-linecap="round" stroke-linejoin="round"><path d="M6 10 Q6 4 12 4 L30 4 L40 13 L64 13 Q70 13 70 19 L70 54 Q70 60 64 60 L12 60 Q6 60 6 54 Z"/></g></svg>
<svg style="position:absolute;left:38px;top:358px;" width="82" height="36" viewBox="0 0 82 36"><g fill="none" stroke="#6c707e" stroke-width="5.2" stroke-linecap="round" stroke-linejoin="round"><circle cx="40" cy="18" r="13"/><path d="M4 18 L27 18 M53 18 L78 18"/></g></svg>
<svg style="position:absolute;left:44px;top:490px;" width="72" height="72" viewBox="0 0 72 72"><g fill="none" stroke="#6c707e" stroke-width="5.2" stroke-linecap="round" stroke-linejoin="round"><circle cx="32" cy="19" r="13"/><rect x="8" y="42" width="23" height="24" rx="3"/><path d="M52 36 L64 56 L40 56 Z"/></g></svg>
<svg style="position:absolute;left:40px;top:642px;" width="78" height="74" viewBox="0 0 78 74"><g fill="none" stroke="#6c707e" stroke-width="5.2" stroke-linecap="round" stroke-linejoin="round"><path d="M20 5 L28 24 L50 24 L58 5 L72 34 Q75 42 68 47 L39 68 L10 47 Q3 42 6 34 Z"/></g></svg>
<div style="position:absolute;left:35px;top:773px;width:91px;height:4px;background:#d3d5db;border-radius:2px;"></div>
<svg style="position:absolute;left:46px;top:835px;" width="68" height="68" viewBox="0 0 68 68"><g fill="none" stroke="#6c707e" stroke-width="5.2" stroke-linecap="round" stroke-linejoin="round"><rect x="4" y="4" width="26" height="26" rx="6"/><rect x="4" y="37" width="26" height="26" rx="6"/><rect x="37" y="37" width="26" height="26" rx="6"/></g></svg>
<div style="position:absolute;left:49px;top:1012.6px;width:12px;height:12px;background:#6c707e;border-radius:50%;"></div>
<div style="position:absolute;left:73.3px;top:1012.6px;width:12px;height:12px;background:#6c707e;border-radius:50%;"></div>
<div style="position:absolute;left:97.4px;top:1012.6px;width:12px;height:12px;background:#6c707e;border-radius:50%;"></div>
<svg style="position:absolute;left:42px;top:1144px;" width="76" height="76" viewBox="0 0 76 76"><g fill="none" stroke="#6c707e" stroke-width="5.2" stroke-linecap="round" stroke-linejoin="round"><path d="M16 40 L16 14 Q16 6 24 6 Q30 6 38 11 Q46 6 52 6 Q60 6 60 14 L60 40"/><path d="M4 41 Q38 46 72 41"/><circle cx="23" cy="58" r="10"/><circle cx="53" cy="58" r="10"/><path d="M33 56 L43 56 M4 57 L13 56 M63 56 L72 57"/></g></svg>
<svg style="position:absolute;left:42px;top:1296px;" width="74" height="74" viewBox="0 0 74 74"><g fill="none" stroke="#6c707e" stroke-width="5.2" stroke-linecap="round" stroke-linejoin="round"><path d="M6 5 L14 5 L18 8 L40 5 Q62 5 68 23 L52 20 L44 20 L44 66 L24 66 L24 20 L6 20 Z M24 25 L44 25"/></g></svg>
<div style="position:absolute;left:51px;top:1453px;width:42px;height:56px;background:#1f80d0;border-radius:5px;"></div>
<svg style="position:absolute;left:62px;top:1448px;" width="52" height="72" viewBox="0 0 52 72"><path d="M45 3 Q54 8 48 28 Q40 48 26 54 Q20 60 22 70 L21 70 Q15 52 22 38 Q30 14 45 3 Z" fill="#0f3f6a"/><path d="M42 10 Q30 30 24 62" stroke="#ffffff" stroke-width="1.6" fill="none"/></svg>
<svg style="position:absolute;left:46px;top:1598px;" width="72" height="72" viewBox="0 0 72 72"><g fill="none" stroke="#6c707e" stroke-width="5.2" stroke-linecap="round" stroke-linejoin="round"><path d="M9 12 Q9 5 16 8 L56 31 Q62 35 56 39 L16 62 Q9 66 9 58 Z"/></g></svg>
<div style="position:absolute;left:90px;top:1596px;width:27px;height:27px;background:#57a865;border-radius:50%;"></div>
<svg style="position:absolute;left:40px;top:1750px;" width="78" height="66" viewBox="0 0 78 66"><g fill="none" stroke="#6c707e" stroke-width="5.2" stroke-linecap="round" stroke-linejoin="round"><path d="M20 4 L58 4 L74 22 L39 62 L4 22 Z M4 22 L74 22 M28 4 L22 22 L39 62 L56 22 L50 4"/></g></svg>
<svg style="position:absolute;left:42px;top:1906px;" width="76" height="60" viewBox="0 0 76 60"><g fill="none" stroke="#6c707e" stroke-width="5.2" stroke-linecap="round" stroke-linejoin="round"><path d="M26 20 L26 8 L36 18 L56 18 L66 8 L66 42 Q66 52 56 52 L36 52 Q26 52 26 42 Z M4 20 L24 20 M6 33 L24 33 M6 45 L24 45"/><circle cx="38" cy="33" r="1.5" fill="#6c707e"/><circle cx="54" cy="33" r="1.5" fill="#6c707e"/><path d="M42 42 L50 42 L46 46 Z" fill="#6c707e"/></g></svg>
<svg style="position:absolute;left:42px;top:2047px;" width="74" height="74" viewBox="0 0 74 74"><g fill="none" stroke="#6c707e" stroke-width="5" stroke-linecap="round" stroke-linejoin="round"><circle cx="37" cy="37" r="31"/><path d="M37 20 L37 38"/><circle cx="37" cy="51" r="2" fill="#6c707e"/></g></svg>
<svg style="position:absolute;left:42px;top:2200px;" width="74" height="66" viewBox="0 0 74 66"><g fill="none" stroke="#6c707e" stroke-width="5.2" stroke-linecap="round" stroke-linejoin="round"><rect x="4" y="4" width="66" height="58" rx="6"/><path d="M18 18 L28 28 L18 38 M34 44 L52 44"/></g></svg>
<svg style="position:absolute;left:44px;top:2346px;" width="68" height="74" viewBox="0 0 68 74"><g fill="none" stroke="#6c707e" stroke-width="5.2" stroke-linecap="round" stroke-linejoin="round"><circle cx="13" cy="13" r="10"/><circle cx="45" cy="23" r="10"/><path d="M13 23 L13 68 M13 52 L34 52 Q45 52 45 42 L45 33"/></g></svg>
<div style="position:absolute;left:2084px;top:204.75px;font-family:'Liberation Sans', sans-serif;font-size:50px;line-height:55.85px;color:#1e1f22;font-weight:400;letter-spacing:1.5px;white-space:pre;-webkit-text-stroke:1.3px #1e1f22;">Running Devices</div>
<svg style="position:absolute;left:2600px;top:207px;" width="58" height="58" viewBox="0 0 58 58"><path d="M14 50 L8 50 Q4 50 4 46 L4 6 Q4 2 8 2 L30 2 Q34 2 34 6 L34 20" fill="none" stroke="#7d8088" stroke-width="3.5"/>
<path d="M16 9 L22 9" stroke="#7d8088" stroke-width="3"/>
<rect x="18" y="25" width="27" height="17" rx="2.5" fill="none" stroke="#a56ae6" stroke-width="3.5"/>
<path d="M16 49 L44 49" stroke="#a56ae6" stroke-width="3.5"/>
<circle cx="46" cy="47" r="8.5" fill="#38d13a" stroke="#4a9a55" stroke-width="2"/></svg>
<div style="position:absolute;left:2665.6px;top:205.66px;font-family:'Liberation Sans', sans-serif;font-size:49px;line-height:54.73px;color:#1e1f22;font-weight:400;letter-spacing:0.1px;white-space:pre;">Medium Phone API ...</div>
<div style="position:absolute;left:2547px;top:300px;width:657px;height:12px;background:#4a7fe8;border-radius:6px;"></div>
<svg style="position:absolute;left:3227px;top:203px;" width="52" height="52" viewBox="0 0 52 52"><path d="M26 4 L26 48 M4 26 L48 26" stroke="#7d8088" stroke-width="4"/></svg>
<svg style="position:absolute;left:3379px;top:208px;" width="46" height="46" viewBox="0 0 46 46"><rect x="2" y="2" width="42" height="42" fill="none" stroke="#7d8088" stroke-width="4"/><rect x="2" y="2" width="42" height="12" fill="#7d8088"/></svg>
<div style="position:absolute;left:3498.5px;top:206.1px;width:11px;height:11px;background:#7d8088;border-radius:50%;"></div>
<div style="position:absolute;left:3498.5px;top:225.3px;width:11px;height:11px;background:#7d8088;border-radius:50%;"></div>
<div style="position:absolute;left:3498.5px;top:244.5px;width:11px;height:11px;background:#7d8088;border-radius:50%;"></div>
<div style="position:absolute;left:3582px;top:229px;width:48px;height:4px;background:#7d8088;"></div>
<svg style="position:absolute;left:2085.0px;top:345.5px;" width="60" height="60" viewBox="0 0 60 60"><g fill="none" stroke="#6c707e" stroke-width="4.5" stroke-linecap="round" stroke-linejoin="round"><path d="M30 6 L30 26"/><path d="M18 12 A21 21 0 1 0 42 12"/></g></svg>
<svg style="position:absolute;left:2185.0px;top:345.5px;" width="60" height="60" viewBox="0 0 60 60"><g fill="none" stroke="#6c707e" stroke-width="4.5" stroke-linecap="round" stroke-linejoin="round"><path d="M6 22 L18 22 L32 8 L32 52 L18 38 L6 38 Z"/><path d="M40 20 Q46 30 40 40 M46 12 Q58 30 46 48"/></g></svg>
<svg style="position:absolute;left:2283.0px;top:345.5px;" width="60" height="60" viewBox="0 0 60 60"><g fill="none" stroke="#6c707e" stroke-width="4.5" stroke-linecap="round" stroke-linejoin="round"><path d="M10 22 L22 22 L36 8 L36 52 L22 38 L10 38 Z"/><path d="M44 20 Q50 30 44 40"/></g></svg>
<div style="position:absolute;left:2382.2px;top:340px;width:3px;height:68px;background:#dfe1e5;"></div>
<div style="position:absolute;left:2616.1px;top:340px;width:3px;height:68px;background:#dfe1e5;"></div>
<div style="position:absolute;left:2952.2px;top:340px;width:3px;height:68px;background:#dfe1e5;"></div>
<div style="position:absolute;left:3083.8px;top:340px;width:3px;height:68px;background:#dfe1e5;"></div>
<div style="position:absolute;left:3533.5px;top:340px;width:3px;height:68px;background:#dfe1e5;"></div>
<svg style="position:absolute;left:2419.0px;top:345.5px;" width="64" height="60" viewBox="0 0 64 60"><g fill="none" stroke="#6c707e" stroke-width="4.5" stroke-linecap="round" stroke-linejoin="round"><rect x="6" y="10" width="26" height="40" rx="3"/><path d="M15 17 L21 17"/><path d="M40 10 A20 20 0 0 1 40 50" stroke="#3574f0"/><path d="M40 10 L48 7 M40 10 L42 18" stroke="#3574f0"/></g></svg>
<svg style="position:absolute;left:2521.0px;top:345.5px;" width="64" height="60" viewBox="0 0 64 60"><g fill="none" stroke="#6c707e" stroke-width="4.5" stroke-linecap="round" stroke-linejoin="round"><rect x="32" y="10" width="26" height="40" rx="3"/><path d="M41 17 L47 17"/><path d="M24 10 A20 20 0 0 0 24 50" stroke="#3574f0"/><path d="M24 10 L16 7 M24 10 L22 18" stroke="#3574f0"/></g></svg>
<svg style="position:absolute;left:2655.0px;top:345.5px;" width="60" height="60" viewBox="0 0 60 60"><g fill="none" stroke="#6c707e" stroke-width="4.5" stroke-linecap="round" stroke-linejoin="round"><path d="M14 30 L44 14 Q46 13 46 16 L46 44 Q46 47 44 46 Z"/></g></svg>
<svg style="position:absolute;left:2757.5px;top:345.5px;" width="60" height="60" viewBox="0 0 60 60"><g fill="none" stroke="#6c707e" stroke-width="4.5" stroke-linecap="round" stroke-linejoin="round"><circle cx="30" cy="30" r="17"/></g></svg>
<svg style="position:absolute;left:2859.0px;top:345.5px;" width="60" height="60" viewBox="0 0 60 60"><g fill="none" stroke="#6c707e" stroke-width="4.5" stroke-linecap="round" stroke-linejoin="round"><rect x="16" y="16" width="28" height="28" rx="3"/></g></svg>
<svg style="position:absolute;left:2995.0px;top:343.5px;" width="62" height="64" viewBox="0 0 62 64"><g fill="none" stroke="#6c707e" stroke-width="4.5" stroke-linecap="round" stroke-linejoin="round"><path d="M18 50 L8 50 L8 6 L36 6 L36 22"/><path d="M18 14 L24 14"/><path d="M40 27 L44 27 L45 31 L49 33 L52 30 L55 33 L52 37 L53 41 L57 42 L57 46 L53 47 L52 51 L55 54 L52 57 L49 54 L45 56 L44 60 L40 60 L39 56 L35 54 L32 57 L29 54 L32 51 L31 47 L27 46 L27 42 L31 41 L32 37 L29 33 L32 30 L35 33 L39 31 Z" stroke-width="3.8"/><circle cx="42" cy="43.5" r="2.8" fill="#6c707e" stroke="none"/></g></svg>
<svg style="position:absolute;left:3121.0px;top:344.5px;" width="64" height="62" viewBox="0 0 64 62"><g fill="none" stroke="#6c707e" stroke-width="4.5" stroke-linecap="round" stroke-linejoin="round"><path d="M6 22 Q6 16 12 16 L18 16 L24 9 L40 9 L46 16 L52 16 Q58 16 58 22 L58 48 Q58 53 52 53 L12 53 Q6 53 6 48 Z"/><circle cx="30" cy="34" r="9"/><circle cx="47" cy="25" r="1" fill="#6c707e"/></g></svg>
<svg style="position:absolute;left:3224.0px;top:345.5px;" width="62" height="60" viewBox="0 0 62 60"><g fill="none" stroke="#6c707e" stroke-width="4.5" stroke-linecap="round" stroke-linejoin="round"><rect x="6" y="14" width="36" height="32" rx="3"/><path d="M42 30 L56 16 L56 44 Z"/></g></svg>
<svg style="position:absolute;left:3302.0px;top:345.5px;" width="60" height="60" viewBox="0 0 60 60"><g fill="none" stroke="#6c707e" stroke-width="4" stroke-linecap="round" stroke-linejoin="round"><path d="M22 14 L38 30 L22 46"/></g></svg>
<svg style="position:absolute;left:3440.0px;top:344.5px;" width="62" height="62" viewBox="0 0 62 62"><g fill="none" stroke="#6c707e" stroke-width="4.5" stroke-linecap="round" stroke-linejoin="round"><path d="M6 40 L6 10 Q6 6 10 6 L44 6"/><path d="M14 48 L14 18 L50 18 L50 30 M14 48 L28 48"/><circle cx="38" cy="40" r="10"/><path d="M45 47 L54 56"/></g></svg>
<svg style="position:absolute;left:3575.0px;top:345.5px;" width="60" height="60" viewBox="0 0 60 60"><g fill="none" stroke="#4fad5b" stroke-width="7" stroke-linecap="round" stroke-linejoin="round"><path d="M10 32 L22 44 L50 16"/></g></svg>
<div style="position:absolute;left:2408px;top:441px;width:908px;height:2019px;background:#fafafa;"></div>
<div style="position:absolute;left:2408px;top:441px;width:908px;height:53px;background:#757575;"></div>
<div style="position:absolute;left:2446px;top:443.08px;font-family:'Liberation Sans', sans-serif;font-size:43px;line-height:48.03px;color:#ffffff;font-weight:400;letter-spacing:-1.2px;white-space:pre;">10:52</div>
<svg style="position:absolute;left:2560px;top:448px;" width="34" height="40" viewBox="0 0 34 40"><path d="M16 3 L29 8 L29 20 Q29 31 16 37 Q3 31 3 20 L3 8 Z" fill="none" stroke="#fff" stroke-width="3.2" stroke-linejoin="round"/><path d="M12 10 Q10 18 16 22 Q22 26 18 34" fill="none" stroke="#fff" stroke-width="3"/></svg>
<svg style="position:absolute;left:2616px;top:448px;" width="34" height="40" viewBox="0 0 34 40"><path d="M16 2 L30 8 L30 20 Q30 32 16 38 Q2 32 2 20 L2 8 Z" fill="#fff"/><path d="M12 13 L22 20 L12 27 Z" fill="#757575"/></svg>
<svg style="position:absolute;left:2673px;top:450px;" width="30" height="36" viewBox="0 0 30 36"><path d="M10 2 L26 2 Q28 2 28 4 L28 32 Q28 34 26 34 L4 34 Q2 34 2 32 L2 10 Z" fill="#fff"/><path d="M14 5 L14 11 M18 5 L18 11 M22 5 L22 11" stroke="#757575" stroke-width="2.2"/></svg>
<svg style="position:absolute;left:3128px;top:446px;" width="48" height="42" viewBox="0 0 48 42"><path d="M3 14 Q24 -6 45 14 L24 40 Z" fill="#fff"/></svg>
<svg style="position:absolute;left:3176px;top:448px;" width="40" height="40" viewBox="0 0 40 40"><path d="M2 38 L37 2 L37 38 Z" fill="#fff"/></svg>
<svg style="position:absolute;left:3228px;top:446px;" width="28" height="44" viewBox="0 0 28 44"><rect x="3" y="6" width="23" height="36" rx="3" fill="#fff"/><rect x="9" y="2" width="10" height="6" fill="#fff"/></svg>
<div style="position:absolute;left:2794.5px;top:1060.32px;font-family:'Liberation Sans', sans-serif;font-size:56px;line-height:62.55px;color:#6750a4;font-weight:400;letter-spacing:-0.5px;white-space:pre;">Team</div>
<div style="position:absolute;left:2554px;top:1150px;width:617px;height:123px;background:#e6e0e9;border-radius:8px 8px 0 0;"></div>
<div style="position:absolute;left:2554px;top:1271px;width:617px;height:3px;background:#49454f;"></div>
<div style="position:absolute;left:2590px;top:1188.99px;font-family:'Liberation Sans', sans-serif;font-size:42px;line-height:46.91px;color:#1d1b20;font-weight:400;letter-spacing:-0.4px;white-space:pre;">Brentford</div>
<div style="position:absolute;left:2554px;top:1296px;width:617px;height:122px;background:#e6e0e9;border-radius:8px 8px 0 0;"></div>
<div style="position:absolute;left:2554px;top:1414px;width:617px;height:5px;background:#6750a4;"></div>
<div style="position:absolute;left:2590px;top:1333.99px;font-family:'Liberation Sans', sans-serif;font-size:42px;line-height:46.91px;color:#1d1b20;font-weight:400;letter-spacing:-0.4px;white-space:pre;">Brentford</div>
<div style="position:absolute;left:2755px;top:1514px;width:215px;height:95px;background:#6750a4;border-radius:48px;"></div>
<div style="position:absolute;left:2755px;top:1537.89px;font-family:'Liberation Sans', sans-serif;font-size:41px;line-height:45.80px;color:#ffffff;font-weight:400;letter-spacing:1.0px;white-space:pre;width:215px;text-align:center;-webkit-text-stroke:1.1px #ffffff;">Insert</div>
<div style="position:absolute;left:2426px;top:1222px;width:124px;height:470px;background:#f5f5fb;border-radius:62px;box-shadow:14px 6px 50px rgba(0,0,0,0.17);"></div>
<svg style="position:absolute;left:2456px;top:1260px;" width="62" height="52" viewBox="0 0 62 52"><path d="M18 4 L54 4 Q58 4 58 8 L58 42 Q58 46 54 46 L18 46 L4 25 Z" fill="none" stroke="#1d1b20" stroke-width="4.5" stroke-linejoin="round"/><path d="M27 16 L43 34 M43 16 L27 34" stroke="#1d1b20" stroke-width="4.5" stroke-linecap="round"/></svg>
<div style="position:absolute;left:2439px;top:1349px;width:98px;height:98px;background:#dce3fc;border-radius:50%;"></div>
<svg style="position:absolute;left:2462px;top:1384px;" width="52" height="34" viewBox="0 0 52 34"><path d="M44 4 L44 18 L6 18 M16 6 L5 18 L16 30" fill="none" stroke="#0f1d40" stroke-width="4.5" stroke-linecap="round" stroke-linejoin="miter"/></svg>
<svg style="position:absolute;left:2464px;top:1488px;" width="50" height="50" viewBox="0 0 50 50"><circle cx="25" cy="25" r="20" fill="none" stroke="#1d1b20" stroke-width="4.5"/><circle cx="18" cy="20" r="3" fill="#1d1b20"/><circle cx="32" cy="20" r="3" fill="#1d1b20"/><path d="M14 28 L36 28 Q34 38 25 38 Q16 38 14 28 Z" fill="#1d1b20"/></svg>
<div style="position:absolute;left:2468.5px;top:1612.5px;width:40px;height:5px;background:#1d1b20;"></div>
<div style="position:absolute;left:2468.5px;top:1624.0px;width:40px;height:5px;background:#1d1b20;"></div>
<div style="position:absolute;left:2468.5px;top:1636.0px;width:40px;height:5px;background:#1d1b20;"></div>
<div style="position:absolute;left:2409px;top:1702px;width:881px;height:153px;border:8px solid #ff0000;border-radius:4px;"></div>
<div style="position:absolute;left:2452px;top:1726.89px;font-family:'Liberation Sans', sans-serif;font-size:41px;line-height:45.80px;color:#b3261e;font-weight:400;letter-spacing:-0.1px;white-space:pre;">UNIQUE constraint failed: Team.name (code</div>
<div style="position:absolute;left:2452px;top:1775.89px;font-family:'Liberation Sans', sans-serif;font-size:41px;line-height:45.80px;color:#b3261e;font-weight:400;letter-spacing:-1.6px;white-space:pre;">2067 SQLITE_CONSTRAINT_UNIQUE)</div>
<svg style="position:absolute;left:3180px;top:1230px;" width="240" height="430" viewBox="0 0 240 430"><path d="M211.5 22 L46 372" stroke="#ff0000" stroke-width="9" stroke-linecap="round"/><path d="M25.6 414.8 L32.5 369.3 L56.6 380.4 Z" fill="#ff0000" stroke="#ff0000" stroke-width="1.5" stroke-linejoin="miter"/></svg>
<div style="position:absolute;left:2408px;top:2407px;width:908px;height:53px;background:#000000;"></div>
<div style="position:absolute;left:2743px;top:2429px;width:238px;height:10px;background:#ffffff;border-radius:5px;"></div>
<div style="position:absolute;left:3523px;top:1966px;width:101px;height:418px;border:3px solid #c2c3c7;border-radius:14px;background:#f7f8fa;"></div>
<svg style="position:absolute;left:3546px;top:1995px;" width="48" height="48" viewBox="0 0 48 48"><path d="M24 2 L24 46 M2 24 L46 24" stroke="#6c707e" stroke-width="3.5"/></svg>
<div style="position:absolute;left:3546px;top:2120px;width:48px;height:3px;background:#c9ccd6;"></div>
<div style="position:absolute;left:3523px;top:2202.99px;font-family:'Liberation Sans', sans-serif;font-size:42px;line-height:46.91px;color:#6c707e;font-weight:700;letter-spacing:-1px;white-space:pre;width:101px;text-align:center;">1:1</div>
<svg style="position:absolute;left:3548px;top:2304px;" width="52" height="48" viewBox="0 0 52 48"><rect x="3" y="3" width="46" height="42" rx="7" fill="none" stroke="#b8babf" stroke-width="3.5"/><path d="M14 20 L14 13 L24 13 M38 27 L38 34 L28 34" fill="none" stroke="#b8babf" stroke-width="3.5"/></svg>
<svg style="position:absolute;left:3727.0px;top:188.0px;" width="70" height="80" viewBox="0 0 70 80"><g fill="none" stroke="#6c707e" stroke-width="4.5" stroke-linecap="round" stroke-linejoin="round"><path d="M8 62 L62 62 L54 48 L54 32 Q54 12 35 12 Q16 12 16 32 L16 48 Z"/><path d="M28 70 Q35 76 42 70 Z" fill="#6c707e"/></g></svg>
<div style="position:absolute;left:3765px;top:188px;width:26px;height:26px;background:#4d87f0;border-radius:50%;border:3px solid #f7f8fa;box-sizing:content-box;left:3762px;top:185px;"></div>
<svg style="position:absolute;left:3723.0px;top:346.0px;" width="80" height="64" viewBox="0 0 80 64"><g fill="none" stroke="#6c707e" stroke-width="4.5" stroke-linecap="round" stroke-linejoin="round"><path d="M8 58 L6 48 Q4 28 18 18 Q32 8 50 12 Q58 14 62 18 Q68 22 72 14 Q74 6 68 6 M8 58 L18 58 Q20 50 26 50 Q32 50 32 58 L40 58 Q42 50 48 50 Q54 50 54 58 L60 58 L60 36 Q66 30 66 22 M30 16 Q28 30 36 32 Q44 32 46 24"/><circle cx="50" cy="26" r="1.8" fill="#6c707e"/></g></svg>
<svg style="position:absolute;left:3728.0px;top:495.0px;" width="70" height="70" viewBox="0 0 70 70"><g fill="none" stroke="#6c707e" stroke-width="4.5" stroke-linecap="round" stroke-linejoin="round"><path d="M20 58 L8 58 L8 6 L40 6 L40 26"/><path d="M18 14 L26 14"/><path d="M26 62 Q26 38 46 38 Q66 38 66 62 Z"/><path d="M32 40 L26 32 M60 40 L64 34"/></g></svg>
<div style="position:absolute;left:3708px;top:621px;width:114px;height:114px;background:#3574f0;border-radius:22px;"></div>
<svg style="position:absolute;left:3728.0px;top:643.0px;" width="70" height="70" viewBox="0 0 70 70"><g fill="none" stroke="#ffffff" stroke-width="4.5" stroke-linecap="round" stroke-linejoin="round"><path d="M20 58 L10 58 L10 6 L40 6"/><path d="M20 14 L28 14"/><rect x="28" y="36" width="30" height="18" rx="2"/><path d="M26 62 L60 62"/><path d="M38 28 L38 34"/></g></svg>
<div style="position:absolute;left:3774px;top:636px;width:26px;height:26px;background:#57a865;border-radius:50%;"></div>
<svg style="position:absolute;left:3728px;top:791px;" width="70" height="70" viewBox="0 0 70 70"><path d="M35 2 Q38 32 68 35 Q38 38 35 68 Q32 38 2 35 Q32 32 35 2 Z" fill="#6c707e"/></svg>
<div style="position:absolute;left:57px;top:2498px;width:30px;height:30px;border:4px solid #3574f0;border-radius:7px;background:#e8eefc;"></div>
<div style="position:absolute;left:101px;top:2486.56px;font-family:'Liberation Sans', sans-serif;font-size:48px;line-height:53.62px;color:#6c707e;font-weight:400;letter-spacing:0.4px;white-space:pre;">Sqlite</div>
<svg style="position:absolute;left:257px;top:2497px;" width="24" height="32" viewBox="0 0 24 32"><path d="M5 4 L17 16 L5 28" fill="none" stroke="#6c707e" stroke-width="3.5" stroke-linecap="round" stroke-linejoin="round"/></svg>
<div style="position:absolute;left:312px;top:2498px;width:30px;height:30px;border:4px solid #3574f0;border-radius:7px;background:#e8eefc;"></div>
<div style="position:absolute;left:356px;top:2486.56px;font-family:'Liberation Sans', sans-serif;font-size:48px;line-height:53.62px;color:#6c707e;font-weight:400;letter-spacing:0.4px;white-space:pre;">app</div>
<svg style="position:absolute;left:475px;top:2497px;" width="24" height="32" viewBox="0 0 24 32"><path d="M5 4 L17 16 L5 28" fill="none" stroke="#6c707e" stroke-width="3.5" stroke-linecap="round" stroke-linejoin="round"/></svg>
<div style="position:absolute;left:526px;top:2486.56px;font-family:'Liberation Sans', sans-serif;font-size:48px;line-height:53.62px;color:#6c707e;font-weight:400;letter-spacing:0.4px;white-space:pre;">src</div>
<svg style="position:absolute;left:625px;top:2497px;" width="24" height="32" viewBox="0 0 24 32"><path d="M5 4 L17 16 L5 28" fill="none" stroke="#6c707e" stroke-width="3.5" stroke-linecap="round" stroke-linejoin="round"/></svg>
<div style="position:absolute;left:680px;top:2498px;width:30px;height:30px;border:4px solid #3574f0;border-radius:7px;background:#e8eefc;"></div>
<div style="position:absolute;left:724px;top:2486.56px;font-family:'Liberation Sans', sans-serif;font-size:48px;line-height:53.62px;color:#6c707e;font-weight:400;letter-spacing:0.4px;white-space:pre;">main</div>
<svg style="position:absolute;left:865px;top:2497px;" width="24" height="32" viewBox="0 0 24 32"><path d="M5 4 L17 16 L5 28" fill="none" stroke="#6c707e" stroke-width="3.5" stroke-linecap="round" stroke-linejoin="round"/></svg>
<div style="position:absolute;left:914px;top:2486.56px;font-family:'Liberation Sans', sans-serif;font-size:48px;line-height:53.62px;color:#6c707e;font-weight:400;letter-spacing:0.4px;white-space:pre;">java</div>
<svg style="position:absolute;left:1042px;top:2497px;" width="24" height="32" viewBox="0 0 24 32"><path d="M5 4 L17 16 L5 28" fill="none" stroke="#6c707e" stroke-width="3.5" stroke-linecap="round" stroke-linejoin="round"/></svg>
<div style="position:absolute;left:1092px;top:2486.56px;font-family:'Liberation Sans', sans-serif;font-size:48px;line-height:53.62px;color:#6c707e;font-weight:400;letter-spacing:0.4px;white-space:pre;">dev</div>
<svg style="position:absolute;left:1213px;top:2497px;" width="24" height="32" viewBox="0 0 24 32"><path d="M5 4 L17 16 L5 28" fill="none" stroke="#6c707e" stroke-width="3.5" stroke-linecap="round" stroke-linejoin="round"/></svg>
<div style="position:absolute;left:1264px;top:2486.56px;font-family:'Liberation Sans', sans-serif;font-size:48px;line-height:53.62px;color:#6c707e;font-weight:400;letter-spacing:0.4px;white-space:pre;">xtec</div>
<svg style="position:absolute;left:1395px;top:2497px;" width="24" height="32" viewBox="0 0 24 32"><path d="M5 4 L17 16 L5 28" fill="none" stroke="#6c707e" stroke-width="3.5" stroke-linecap="round" stroke-linejoin="round"/></svg>
<svg style="position:absolute;left:1452px;top:2490px;" width="48" height="48" viewBox="0 0 48 48"><path d="M3 3 L44 3 L23.5 23.5 L44 44 L3 44 Z" fill="#f3effc" stroke="#8f5cf2" stroke-width="4" stroke-linejoin="round"/></svg>
<div style="position:absolute;left:1518px;top:2486.56px;font-family:'Liberation Sans', sans-serif;font-size:48px;line-height:53.62px;color:#6c707e;font-weight:400;letter-spacing:1.0px;white-space:pre;">MainActivity.kt</div>
<svg style="position:absolute;left:1885px;top:2497px;" width="24" height="32" viewBox="0 0 24 32"><path d="M5 4 L17 16 L5 28" fill="none" stroke="#6c707e" stroke-width="3.5" stroke-linecap="round" stroke-linejoin="round"/></svg>
<svg style="position:absolute;left:1940px;top:2488px;" width="56" height="56" viewBox="0 0 56 56"><path d="M28 4 L50 15 L50 41 L28 52 L6 41 L6 15 Z M6 15 L28 26 L50 15 M28 26 L28 52" fill="#e8eefc" stroke="#3574f0" stroke-width="4" stroke-linejoin="round"/></svg>
<div style="position:absolute;left:2013px;top:2486.56px;font-family:'Liberation Sans', sans-serif;font-size:48px;line-height:53.62px;color:#6c707e;font-weight:400;letter-spacing:1.4px;white-space:pre;">TeamInsertScreen</div>
<div style="position:absolute;left:2634px;top:2490.56px;font-family:'Liberation Sans', sans-serif;font-size:48px;line-height:53.62px;color:#6c707e;font-weight:400;letter-spacing:0.8px;white-space:pre;">134:7</div>
<div style="position:absolute;left:2818px;top:2490.56px;font-family:'Liberation Sans', sans-serif;font-size:48px;line-height:53.62px;color:#6c707e;font-weight:400;letter-spacing:0.8px;white-space:pre;">CRLF</div>
<div style="position:absolute;left:2997px;top:2490.56px;font-family:'Liberation Sans', sans-serif;font-size:48px;line-height:53.62px;color:#6c707e;font-weight:400;letter-spacing:0.8px;white-space:pre;">UTF-8</div>
<svg style="position:absolute;left:3208px;top:2492px;" width="50" height="50" viewBox="0 0 50 50"><path d="M4 4 L46 4 L46 38 L40 38 L46 46 L30 38 L4 38 Z" fill="none" stroke="#6c707e" stroke-width="4" stroke-linejoin="round"/><path d="M25 12 L25 24" stroke="#6c707e" stroke-width="4" stroke-linecap="round"/><circle cx="25" cy="31" r="2.5" fill="#6c707e"/></svg>
<div style="position:absolute;left:3326px;top:2490.56px;font-family:'Liberation Sans', sans-serif;font-size:48px;line-height:53.62px;color:#6c707e;font-weight:400;letter-spacing:1.3px;white-space:pre;">4 spaces</div>
<svg style="position:absolute;left:3600px;top:2492px;" width="52" height="50" viewBox="0 0 52 50"><rect x="3" y="22" width="36" height="26" rx="6" fill="none" stroke="#6c707e" stroke-width="4"/><path d="M30 22 L30 14 Q30 4 39 4 Q48 4 48 14 L48 20" fill="none" stroke="#6c707e" stroke-width="4" stroke-linecap="round"/><path d="M21 30 L21 38" stroke="#6c707e" stroke-width="4" stroke-linecap="round"/></svg>
<svg style="position:absolute;left:3713px;top:2489px;" width="56" height="56" viewBox="0 0 56 56"><circle cx="28" cy="28" r="24" fill="none" stroke="#6c707e" stroke-width="4"/><path d="M28 13 L28 30" stroke="#6c707e" stroke-width="6" stroke-linecap="round"/><circle cx="28" cy="40" r="3.5" fill="#6c707e"/></svg>
<div style="position:absolute;left:2004px;top:309px;width:2px;height:2151px;background:#ebecf0;"></div>
<div style="position:absolute;left:2006px;top:434px;width:28px;height:2px;background:#ebecf0;"></div></body></html>
